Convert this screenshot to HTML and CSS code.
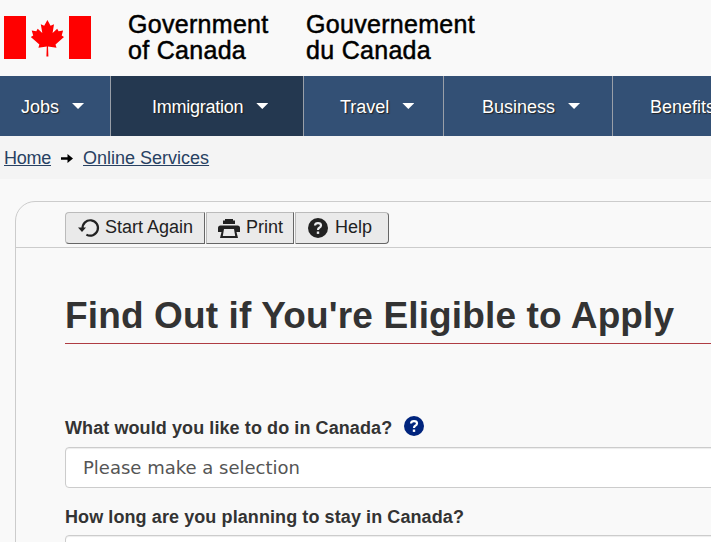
FILE: index.html
```html
<!DOCTYPE html>
<html lang="en">
<head>
<meta charset="utf-8">
<title>Find Out if You're Eligible to Apply</title>
<link rel="stylesheet" href="styles.css">
</head>
<body>
<header class="brand">
  <svg class="flag" viewBox="0 0 87 43" width="87" height="43">
    <path fill="#f00" d="M0 0H22V43H0ZM65 0H87V43H65Z"/>
    <path fill="#f00" d="M43.400 4L46.600 9.700L50 8.200L48.600 17L53.200 12.700L54.600 15.300L59.100 14.400L57.700 19.400L60 21L51.500 28.400L52.500 31.700L44 30.500L44.400 40.500H42.400L42.800 30.500L34.400 31.700L35.400 28.400L26.800 21L29.200 19.400L27.700 14.400L32.300 15.300L33.700 12.700L38.300 17L36.800 8.200L40.200 9.700Z"/>
  </svg>
  <div class="wordmark en">Government<br>of Canada</div>
  <div class="wordmark fr">Gouvernement<br>du Canada</div>
</header>
<nav class="menu">
  <a class="item jobs"><span>Jobs</span><i class="caret"></i></a>
  <a class="item immigration"><span>Immigration</span><i class="caret"></i></a>
  <a class="item travel"><span>Travel</span><i class="caret"></i></a>
  <a class="item business"><span>Business</span><i class="caret"></i></a>
  <a class="item benefits"><span>Benefits</span><i class="caret"></i></a>
</nav>
<div class="crumbs">
  <a class="home" href="#">Home</a>
  <svg width="12" height="9" viewBox="0 0 12 9"><path d="M0 3.200H6.500V0L12 4.500L6.500 9V5.800H0Z"/></svg>
  <a href="#">Online Services</a>
</div>
<main class="panel">
  <div class="toolbar">
    <button class="tool again"><svg width="22" height="20" viewBox="0 0 22 20"><path d="M4.600 10.500A7.700 7.700 0 1 1 8.400 16.600" fill="none" stroke="#222" stroke-width="2.200"/><path d="M0 9.600H8L4 14Z" fill="#222"/></svg><span>Start Again</span></button>
    <button class="tool print"><svg width="22" height="19" viewBox="0 0 22 19"><path fill="#222" fill-rule="evenodd" d="M7 0H15V1.500H17V5H5V1.500H7ZM2.500 6.500H19.500Q22 6.500 22 9V13H18.500L20 19H2L3.500 13H0V9Q0 6.500 2.500 6.500ZM6 10L4.800 17H17.200L16 10Z"/></svg><span>Print</span></button>
    <button class="tool help"><svg width="20" height="20" viewBox="0 0 20 20"><circle cx="10" cy="10" r="10" fill="#222"/><path d="M7 7.500Q7.200 5.100 10 5.100Q13 5.100 13 7.400Q13 8.800 11.300 9.700Q10 10.400 10 12" fill="none" stroke="#eaebed" stroke-width="2.200"/><path d="M8.800 13.500H11.200V15.900H8.800Z" fill="#eaebed"/></svg><span>Help</span></button>
  </div>
  <div class="content">
    <h1><span>Find Out if You're Eligible to Apply</span></h1>
    <div class="question first"><label>What would you like to do in Canada?</label><svg width="20" height="20" viewBox="0 0 20 20"><circle cx="10" cy="10" r="10" fill="#00247d"/><path d="M7 7.500Q7.200 5.100 10 5.100Q13 5.100 13 7.400Q13 8.800 11.300 9.700Q10 10.400 10 12" fill="none" stroke="#fff" stroke-width="2.200"/><path d="M8.800 13.500H11.200V15.900H8.800Z" fill="#fff"/></svg></div>
    <div class="field">Please make a selection</div>
    <div class="question second"><label>How long are you planning to stay in Canada?</label></div>
    <div class="field"></div>
  </div>
</main>
</body>
</html>
```
FILE: styles.css
```css
* { box-sizing: border-box; }
html, body { margin: 0; height: 542px; overflow: hidden; }
body { background: #f9f9f9; color: #333; font: 18px/24px "Liberation Sans", Arial, sans-serif; }
svg { display: block; flex: none; }

.brand { height: 76px; padding: 12px 0 0 4px; display: flex; align-items: flex-start; }
.flag { margin-top: 3.5px; }
.wordmark { color: #000; font-size: 25px; line-height: 25.5px; letter-spacing: .3px; -webkit-text-stroke: .5px #000; white-space: nowrap; }
.en { margin-left: 37px; width: 178px; }

.menu { display: flex; width: 780px; height: 60px; background: #335075; color: #fff; text-shadow: 1px 1px 1px #222; }
.item { display: flex; align-items: center; flex: none; border-right: 1px solid #999fa8; }
.item span { padding-top: 2px; }
.caret { width: 12px; height: 6px; margin-left: 13px; background: #fff; clip-path: polygon(0 0, 100% 0, 50% 100%); }
.jobs { width: 111px; padding-left: 21px; }
.immigration { width: 193px; padding-left: 41px; background: #243850; letter-spacing: -.25px; }
.travel { width: 140px; padding-left: 36px; }
.business { width: 169px; padding-left: 38px; }
.benefits { width: 167px; padding-left: 37px; }

.crumbs { height: 43px; background: #f4f4f4; display: flex; align-items: center; padding: 1px 0 0 4px; }
.crumbs a { color: #284162; text-decoration: underline; }
.crumbs .home { letter-spacing: -.25px; }
.crumbs svg { margin: 1px 10px 0 10px; }

.panel { width: 760px; height: 400px; margin: 22px 0 0 15px; border: 1px solid #ccc; border-radius: 20px 0 0 0; }
.toolbar { height: 46px; padding: 10px 0 0 49px; border-bottom: 1px solid #ccc; display: flex; gap: 1px; }
.tool { display: flex; align-items: center; height: 32px; padding: 0; margin: 0; border: 1px solid #bbb; border-right-color: #666; border-bottom-color: #666; background: #eaeaea; color: #222; font: inherit; }
.tool span { margin-top: -2px; }
.again { width: 140px; padding-left: 12px; border-radius: 4px 0 0 4px; }
.again span { margin-left: 5px; }
.print { width: 88px; padding-left: 11px; }
.print span { margin-left: 6px; }
.help { width: 94px; padding-left: 12px; border-radius: 0 4px 4px 0; }
.help span { margin-left: 7px; }

.content { padding-left: 49px; }
h1 { margin: 0; height: 96px; padding-top: 47px; border-bottom: 1px solid #af3c43; font-size: 37px; line-height: 42px; letter-spacing: .14px; white-space: nowrap; }
.question { display: flex; align-items: center; font-weight: bold; letter-spacing: .09px; }
.first { margin-top: 71px; height: 24px; }
.first label { padding-top: 1px; }
.first svg { margin: -2px 0 0 12px; }
.field { margin-top: 8px; height: 41px; padding: 8px 17px; border: 1px solid #ccc; border-radius: 4px; background: #fff; color: #555; font: 18px/24px "DejaVu Sans", Verdana, sans-serif; box-shadow: inset 0 1px 1px #00000013; }
.second { margin-top: 17px; height: 24px; }
.second + .field { margin-top: 6px; }
```
